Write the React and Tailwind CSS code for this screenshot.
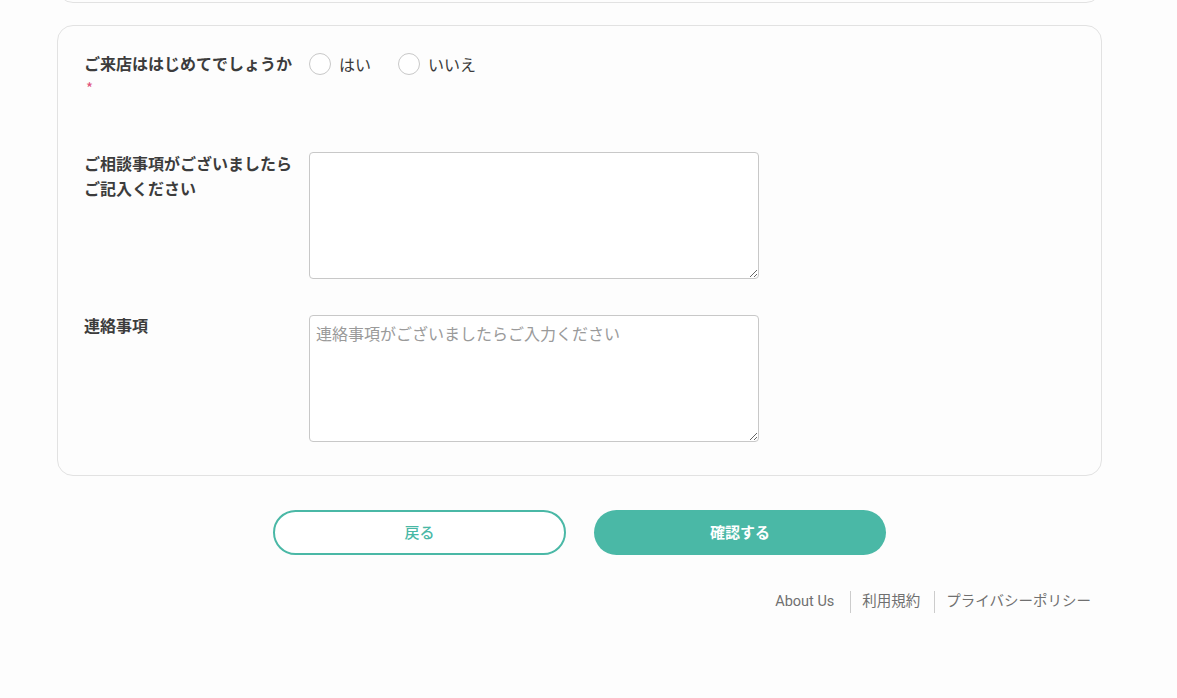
import React from "react";

const jp = { fontFamily: '"Noto Sans CJK JP", "Noto Sans", sans-serif' };

function Radio({ label }) {
  return (
    <label className="flex items-center gap-[8px] cursor-pointer">
      <span className="w-[22px] h-[22px] rounded-full border border-[#c8c8c8] bg-white" />
      <span className="text-[16px] text-[#3a3a3a] leading-[22px]">{label}</span>
    </label>
  );
}

export default function App() {
  return (
    <div className="min-h-[698px] w-full bg-[#fdfdfd]" style={jp}>
      <div className="ml-[57px] w-[1045px]">
        <div className="h-[3px] overflow-hidden flex flex-col justify-end">
          <div className="h-[40px] shrink-0 rounded-[16px] border border-[#e2e2e2]" />
        </div>

        <div className="mt-[22px] rounded-[16px] border border-[#e2e2e2] bg-[#fdfdfd] pl-[26px] pt-[25px] pb-[33px]">
          <div className="flex flex-col gap-[36px]">
            <div className="flex items-start min-h-[65px]">
              <div className="w-[225px] shrink-0">
                <div className="text-[16px] font-bold text-[#3c3c3c] leading-[25px]">ご来店ははじめてでしょうか</div>
                <div className="text-[15px] text-[#e0507a] leading-[20px] pl-[2px] mt-[2px]">*</div>
              </div>
              <div className="flex items-center gap-[27px] pt-[2px]">
                <Radio label="はい" />
                <Radio label="いいえ" />
              </div>
            </div>

            <div className="flex items-start">
              <div className="w-[225px] shrink-0 text-[16px] font-bold text-[#3c3c3c] leading-[25px] -mt-[1px]">
                ご相談事項がございましたら
                <br />
                ご記入ください
              </div>
              <textarea
                className="w-[450px] h-[127px] rounded-[4px] border border-[#c8c8c8] bg-white px-[6px] py-[7px] text-[16px] leading-[22px] text-[#333] outline-none"
                style={jp}
              />
            </div>

            <div className="flex items-start">
              <div className="w-[225px] shrink-0 text-[16px] font-bold text-[#3c3c3c] leading-[25px] -mt-[2px]">
                連絡事項
              </div>
              <textarea
                placeholder="連絡事項がございましたらご入力ください"
                className="w-[450px] h-[127px] rounded-[4px] border border-[#c8c8c8] bg-white px-[6px] py-[6px] text-[16px] leading-[22px] text-[#333] placeholder:text-[#9a9a9a] outline-none"
                style={jp}
              />
            </div>
          </div>
        </div>

        <div className="mt-[34px] flex justify-center gap-[28px]">
          <button
            className="w-[293px] h-[45px] rounded-full border-2 border-[#4ab8a6] bg-white text-[#4ab8a6] text-[15px] font-medium"
            style={jp}
          >
            戻る
          </button>
          <button
            className="w-[292px] h-[45px] rounded-full bg-[#4ab8a6] text-white text-[15px] font-bold"
            style={jp}
          >
            確認する
          </button>
        </div>

        <div className="mt-[36px] flex justify-end pr-[11px] text-[14.5px] text-[#707070]" style={{ fontFamily: 'Roboto, "Noto Sans CJK JP", sans-serif' }}>
          <span className="leading-[22px] pr-[16px]">About Us</span>
          <span className="leading-[22px] pl-[11px] pr-[14px] border-l border-[#cccccc]">利用規約</span>
          <span className="leading-[22px] pl-[11px] border-l border-[#cccccc]">プライバシーポリシー</span>
        </div>
      </div>
    </div>
  );
}
